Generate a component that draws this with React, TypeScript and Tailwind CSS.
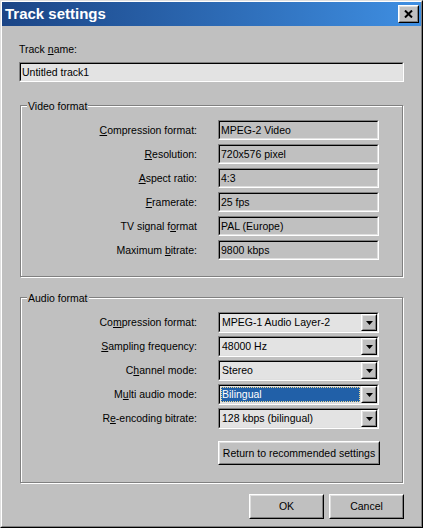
import type { ReactNode } from "react";

type BoxProps = {
  children?: ReactNode;
  className?: string;
};

function Sunken({ children, className = "" }: BoxProps) {
  return (
    <div className={`border border-t-[#808080] border-l-[#808080] border-r-white border-b-white ${className}`}>
      <div className="flex h-full items-center border border-t-black border-l-black border-r-[#dfdfdf] border-b-[#dfdfdf]">
        {children}
      </div>
    </div>
  );
}

function Raised({ children, className = "" }: BoxProps) {
  return (
    <div className={`border border-t-white border-l-white border-r-black border-b-black ${className}`}>
      <div className="flex h-full items-center justify-center border border-t-[#dfdfdf] border-l-[#dfdfdf] border-r-[#808080] border-b-[#808080] bg-[#c0c0c0]">
        {children}
      </div>
    </div>
  );
}

function Group({ title, children, className = "" }: BoxProps & { title: string }) {
  return (
    <div className={`relative mx-[1px] border border-[#808080] shadow-[inset_1px_1px_0_#fff,1px_1px_0_#fff] ${className}`}>
      <span className="absolute left-[6px] top-[-6px] bg-[#c0c0c0] px-[1px] leading-[13px]">{title}</span>
      {children}
    </div>
  );
}

function Row({ label, children }: { label: ReactNode; children: ReactNode }) {
  return (
    <div className="flex items-center">
      <div className="w-[176px] text-right leading-[13px]">{label}</div>
      <div className="ml-[21px]">{children}</div>
    </div>
  );
}

function ReadOnly({ value }: { value: string }) {
  return (
    <Sunken className="h-[20px] w-[161px]">
      <span className="pl-[1px] leading-[13px]">{value}</span>
    </Sunken>
  );
}

function Combo({ value, selected = false }: { value: string; selected?: boolean }) {
  return (
    <Sunken className="h-[21px] w-[161px]">
      <div className="flex h-full flex-1 items-center bg-[#e3e3e3]">
        {selected ? (
          <div className="m-[1px] flex h-[15px] flex-1 items-center border border-dotted border-[#e9d690] bg-[#2160a8] text-white">
            <span className="leading-[13px]">{value}</span>
          </div>
        ) : (
          <span className="flex-1 pl-[2px] leading-[13px]">{value}</span>
        )}
        <Raised className="h-full w-[16px]">
          <svg width="7" height="4" viewBox="0 0 7 4">
            <polygon points="0,0 7,0 3.5,4" fill="#000" />
          </svg>
        </Raised>
      </div>
    </Sunken>
  );
}

const videoRows: { label: ReactNode; value: string }[] = [
  { label: <><u>C</u>ompression format:</>, value: "MPEG-2 Video" },
  { label: <><u>R</u>esolution:</>, value: "720x576 pixel" },
  { label: <><u>A</u>spect ratio:</>, value: "4:3" },
  { label: <><u>F</u>ramerate:</>, value: "25 fps" },
  { label: <>TV signal f<u>o</u>rmat</>, value: "PAL (Europe)" },
  { label: <>Maximum <u>b</u>itrate:</>, value: "9800 kbps" },
];

const audioRows: { label: ReactNode; value: string; selected?: boolean }[] = [
  { label: <>Co<u>m</u>pression format:</>, value: "MPEG-1 Audio Layer-2" },
  { label: <><u>S</u>ampling frequency:</>, value: "48000 Hz" },
  { label: <>C<u>h</u>annel mode:</>, value: "Stereo" },
  { label: <>M<u>u</u>lti audio mode:</>, value: "Bilingual", selected: true },
  { label: <>R<u>e</u>-encoding bitrate:</>, value: "128 kbps (bilingual)" },
];

export default function App() {
  return (
    <div className="h-[528px] w-[423px] border border-t-[#dfdfdf] border-l-[#dfdfdf] border-r-black border-b-black bg-[#c0c0c0] font-['Liberation_Sans',Arial,sans-serif] text-[10.5px] text-black">
      <div className="h-full border border-t-white border-l-white border-r-[#808080] border-b-[#808080]">
        <div className="flex h-[24px] items-center justify-between bg-linear-to-r from-[#1b4586] to-[#3f8fe2] pl-[3px] pr-[2px]">
          <span className="text-[15px] font-bold leading-[18px] text-white">Track settings</span>
          <Raised className="h-[18px] w-[21px]">
            <svg width="9" height="8" viewBox="0 0 9 8">
              <path d="M1 0.5 L8 7.5 M8 0.5 L1 7.5" stroke="#000" strokeWidth="2" />
            </svg>
          </Raised>
        </div>

        <div className="px-[17px]">
          <div className="mt-[17px] leading-[13px]">
            Track <u>n</u>ame:
          </div>
          <Sunken className="mt-[6px] h-[20px]">
            <div className="flex h-full flex-1 items-center bg-[#e3e3e3] pl-[1px]">
              <span className="leading-[13px]">Untitled track1</span>
            </div>
          </Sunken>

          <Group title="Video format" className="mt-[23px] pt-[14px] pb-[16px]">
            <div className="flex flex-col gap-[4px]">
              {videoRows.map((row, index) => (
                <Row key={index} label={row.label}>
                  <ReadOnly value={row.value} />
                </Row>
              ))}
            </div>
          </Group>

          <Group title="Audio format" className="mt-[20px] pt-[14px] pb-[17px]">
            <div className="flex flex-col gap-[3px]">
              {audioRows.map((row, index) => (
                <Row key={index} label={row.label}>
                  <Combo value={row.value} selected={row.selected} />
                </Row>
              ))}
            </div>
            <div className="mt-[12px] pl-[197px]">
              <Raised className="h-[24px] w-[162px]">
                <span className="leading-[13px]">Return to recommended settings</span>
              </Raised>
            </div>
          </Group>

          <div className="mt-[11px] flex justify-end gap-[5px]">
            <Raised className="h-[25px] w-[75px]">
              <span className="leading-[13px]">OK</span>
            </Raised>
            <Raised className="h-[25px] w-[75px]">
              <span className="leading-[13px]">Cancel</span>
            </Raised>
          </div>
        </div>
      </div>
    </div>
  );
}
